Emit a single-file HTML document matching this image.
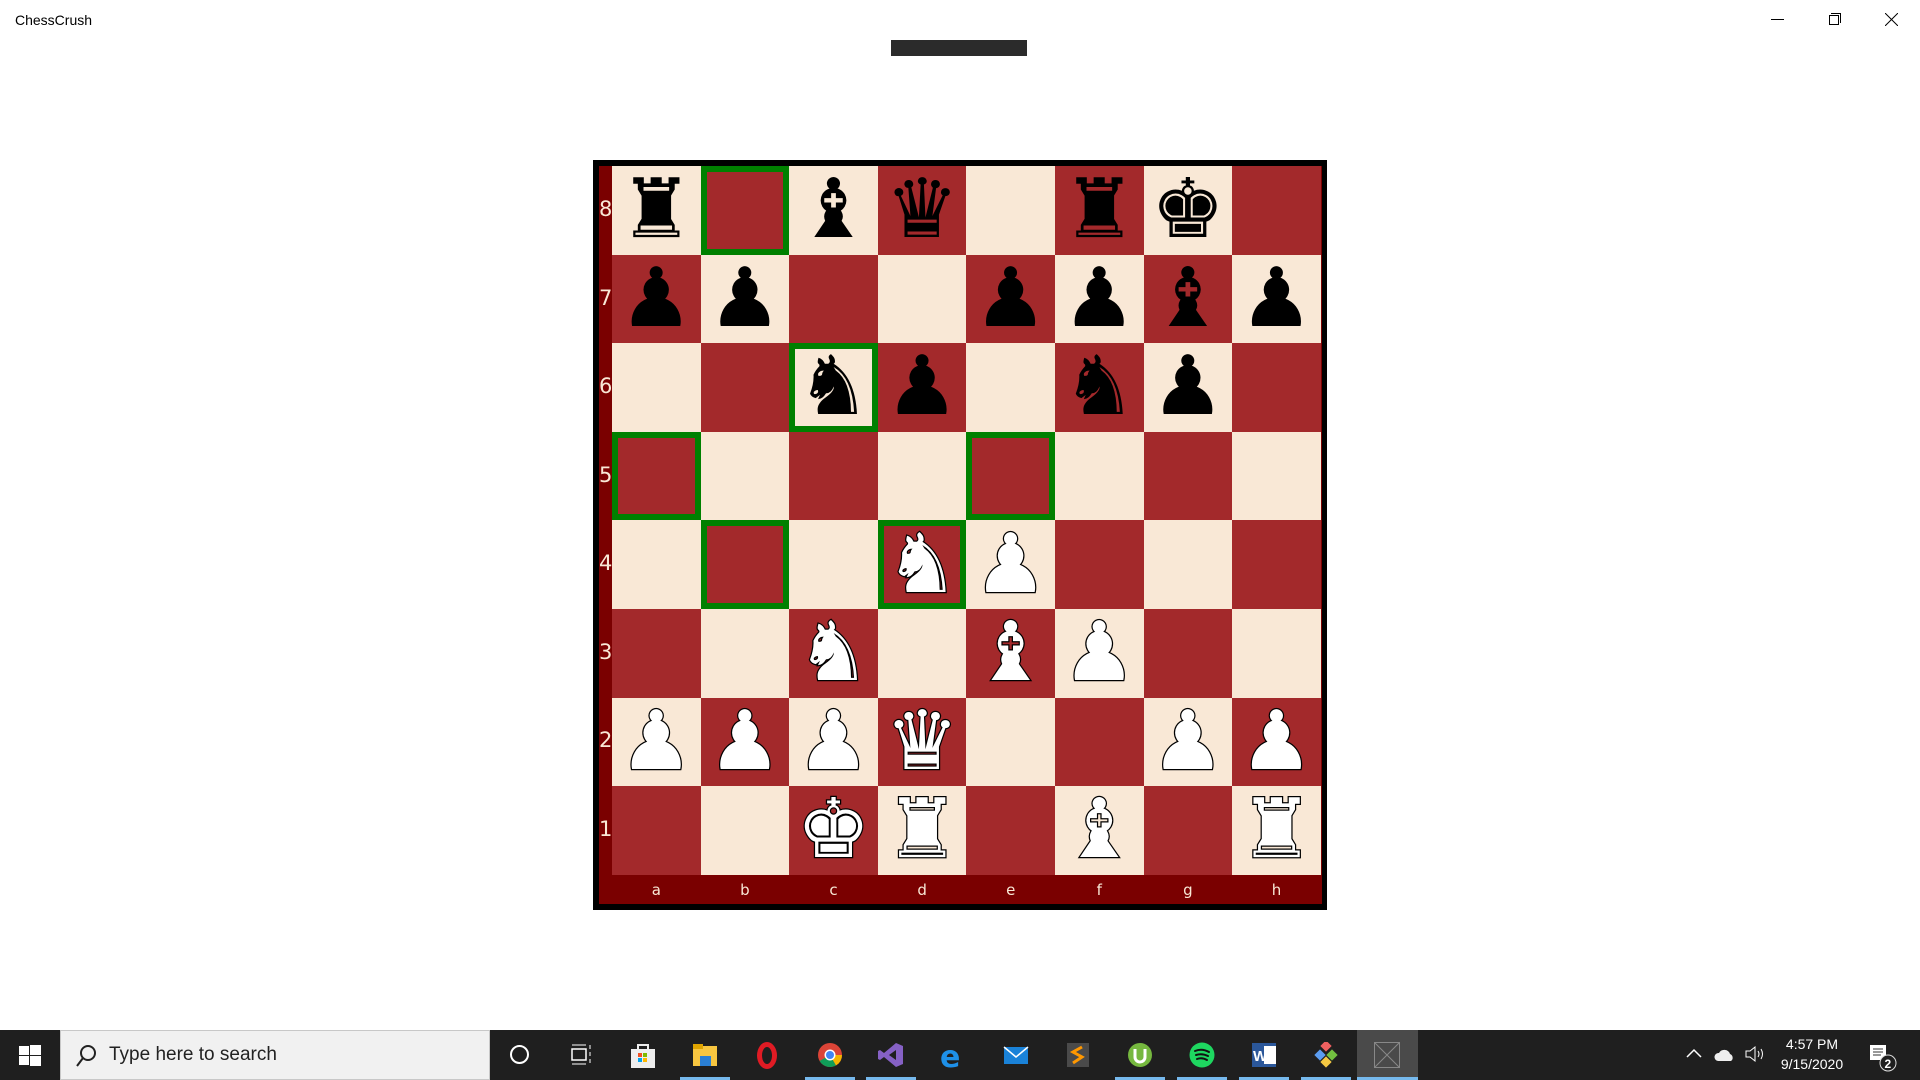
<!DOCTYPE html>
<html><head><meta charset="utf-8"><style>
*{margin:0;padding:0;box-sizing:border-box}
body{width:1920px;height:1080px;background:#fff;position:relative;overflow:hidden;font-family:"Liberation Sans",sans-serif}
.title{position:absolute;left:15px;top:12px;font-size:14px;color:#000}
.ctl{position:absolute;top:8px;font-size:16px;color:#000}
.topbar{position:absolute;left:891px;top:40px;width:136px;height:16px;background:#2b2b2b}
.board{position:absolute;left:593px;top:160px;width:734px;height:750px;background:#000}
.strip{position:absolute;left:6px;top:6px;width:723px;height:738px;background:#7a0000}
.grid{position:absolute;left:612px;top:166px;display:grid;grid-template-columns:repeat(8,88.6px);grid-template-rows:repeat(8,88.6px)}
.sq{display:flex;align-items:center;justify-content:center;font-family:"DejaVu Sans",sans-serif;font-size:82px;line-height:1;overflow:hidden}
.L{background:#f9e8d6}.D{background:#a3292b}
.h{box-shadow:inset 0 0 0 6px #008000}
.b{color:#000}
.w{color:#fff;-webkit-text-stroke:2.5px #000;paint-order:stroke fill}
.rl{position:absolute;left:599px;width:13px;text-align:center;color:#f9e8d6;font-size:21px;font-family:"DejaVu Sans",sans-serif}
.fl{position:absolute;top:881px;width:88.6px;text-align:center;color:#f9e8d6;font-size:15px;font-family:"DejaVu Sans",sans-serif}
.tb{position:absolute;left:0;top:1030px;width:1920px;height:50px;background:#1f1f1f}
.search{position:absolute;left:60px;top:1030px;width:430px;height:50px;background:#f1f1f1;border:1px solid #c8c8c8}
.search span{position:absolute;left:48px;top:13px;font-size:19px;color:#222}
.ic{position:absolute;top:1042px;width:26px;height:26px}
.ul{position:absolute;top:1077px;height:3px;width:50px;background:#76b9ed}
</style></head><body>
<div class="title">ChessCrush</div>
<div style="position:absolute;left:1771px;top:19px;width:13px;height:1px;background:#000"></div>
<div style="position:absolute;left:1829px;top:15px;width:10px;height:10px;border:1px solid #000;background:#fff"></div>
<div style="position:absolute;left:1831px;top:13px;width:10px;height:10px;border-top:1px solid #000;border-right:1px solid #000"></div>
<svg style="position:absolute;left:1885px;top:13px" width="13" height="13"><path d="M0 0 L13 13 M13 0 L0 13" stroke="#000" stroke-width="1"/></svg>
<div class="topbar"></div>

<div class="board"><div class="strip"></div></div>
<div class="grid">
<div class="sq L b">&#9820;</div>
<div class="sq D h"></div>
<div class="sq L b">&#9821;</div>
<div class="sq D b">&#9819;</div>
<div class="sq L"></div>
<div class="sq D b">&#9820;</div>
<div class="sq L b">&#9818;</div>
<div class="sq D"></div>

<div class="sq D b">&#9823;&#xFE0E;</div>
<div class="sq L b">&#9823;&#xFE0E;</div>
<div class="sq D"></div>
<div class="sq L"></div>
<div class="sq D b">&#9823;&#xFE0E;</div>
<div class="sq L b">&#9823;&#xFE0E;</div>
<div class="sq D b">&#9821;</div>
<div class="sq L b">&#9823;&#xFE0E;</div>

<div class="sq L"></div>
<div class="sq D"></div>
<div class="sq L b h">&#9822;</div>
<div class="sq D b">&#9823;&#xFE0E;</div>
<div class="sq L"></div>
<div class="sq D b">&#9822;</div>
<div class="sq L b">&#9823;&#xFE0E;</div>
<div class="sq D"></div>

<div class="sq D h"></div>
<div class="sq L"></div>
<div class="sq D"></div>
<div class="sq L"></div>
<div class="sq D h"></div>
<div class="sq L"></div>
<div class="sq D"></div>
<div class="sq L"></div>

<div class="sq L"></div>
<div class="sq D h"></div>
<div class="sq L"></div>
<div class="sq D w h">&#9822;</div>
<div class="sq L w">&#9823;&#xFE0E;</div>
<div class="sq D"></div>
<div class="sq L"></div>
<div class="sq D"></div>

<div class="sq D"></div>
<div class="sq L"></div>
<div class="sq D w">&#9822;</div>
<div class="sq L"></div>
<div class="sq D w">&#9821;</div>
<div class="sq L w">&#9823;&#xFE0E;</div>
<div class="sq D"></div>
<div class="sq L"></div>

<div class="sq L w">&#9823;&#xFE0E;</div>
<div class="sq D w">&#9823;&#xFE0E;</div>
<div class="sq L w">&#9823;&#xFE0E;</div>
<div class="sq D w">&#9819;</div>
<div class="sq L"></div>
<div class="sq D"></div>
<div class="sq L w">&#9823;&#xFE0E;</div>
<div class="sq D w">&#9823;&#xFE0E;</div>

<div class="sq D"></div>
<div class="sq L"></div>
<div class="sq D w">&#9818;</div>
<div class="sq L w">&#9820;</div>
<div class="sq D"></div>
<div class="sq L w">&#9821;</div>
<div class="sq D"></div>
<div class="sq L w">&#9820;</div>
</div>
<div class="rl" style="top:197px">8</div>
<div class="rl" style="top:286px">7</div>
<div class="rl" style="top:374px">6</div>
<div class="rl" style="top:463px">5</div>
<div class="rl" style="top:551px">4</div>
<div class="rl" style="top:640px">3</div>
<div class="rl" style="top:728px">2</div>
<div class="rl" style="top:817px">1</div>
<div class="fl" style="left:612px">a</div>
<div class="fl" style="left:700.6px">b</div>
<div class="fl" style="left:789.2px">c</div>
<div class="fl" style="left:877.8px">d</div>
<div class="fl" style="left:966.4px">e</div>
<div class="fl" style="left:1055px">f</div>
<div class="fl" style="left:1143.6px">g</div>
<div class="fl" style="left:1232.2px">h</div>

<div class="tb"></div>
<svg style="position:absolute;left:19px;top:1045px" width="22" height="22"><rect x="0" y="1" width="10" height="9" fill="#fff"/><rect x="11" y="0" width="11" height="10" fill="#fff"/><rect x="0" y="11" width="10" height="9" fill="#fff"/><rect x="11" y="11" width="11" height="10" fill="#fff"/></svg>
<div class="search"><svg style="position:absolute;left:14px;top:13px" width="22" height="24"><circle cx="13" cy="9" r="7" fill="none" stroke="#222" stroke-width="2"/><line x1="8" y1="14" x2="2" y2="22" stroke="#222" stroke-width="2"/></svg><span>Type here to search</span></div>
<div style="position:absolute;left:510px;top:1045px;width:19px;height:19px;border:2.5px solid #fff;border-radius:50%"></div>
<svg style="position:absolute;left:570px;top:1044px" width="22" height="22"><rect x="2" y="5" width="14" height="11" fill="none" stroke="#fff" stroke-width="1.5"/><line x1="2" y1="1" x2="16" y2="1" stroke="#fff"/><line x1="2" y1="20" x2="16" y2="20" stroke="#fff"/><line x1="20" y1="1" x2="20" y2="20" stroke="#fff" stroke-dasharray="4 3"/></svg>
<svg class="ic" style="left:630px"><rect x="1" y="7" width="24" height="19" fill="#eee"/><path d="M8 7 V3 h10 v4" fill="none" stroke="#eee" stroke-width="2"/><rect x="8" y="11" width="4" height="4" fill="#f25022"/><rect x="13" y="11" width="4" height="4" fill="#7fba00"/><rect x="8" y="16" width="4" height="4" fill="#00a4ef"/><rect x="13" y="16" width="4" height="4" fill="#ffb900"/></svg>
<svg class="ic" style="left:692px"><rect x="1" y="4" width="24" height="20" fill="#f8c640"/><rect x="1" y="2" width="10" height="5" fill="#e0a400"/><rect x="8" y="14" width="11" height="10" fill="#2a7fd4"/></svg>
<div class="ul" style="left:680px"></div>
<div style="position:absolute;left:757px;top:1042px;width:20px;height:27px;border:5px solid #e01b24;border-radius:50%"></div>
<svg class="ic" style="left:817px"><circle cx="13" cy="13" r="12" fill="#db4437"/><path d="M13 13 L2.6 19 A12 12 0 0 0 19 23.4Z" fill="#0f9d58"/><path d="M13 13 L19 23.4 A12 12 0 0 0 25 13 Z" fill="#f4b400"/><circle cx="13" cy="13" r="5.5" fill="#fff"/><circle cx="13" cy="13" r="4" fill="#4285f4"/></svg>
<div class="ul" style="left:805px"></div>
<svg class="ic" style="left:878px"><path d="M18 1 L25 4 V22 L18 25 L6 15 L2 18 L0 17 V9 L2 8 L6 11Z M18 8 L11 13 L18 18Z" fill="#8661c5" fill-rule="evenodd"/></svg>
<div class="ul" style="left:866px"></div>
<div style="position:absolute;left:940px;top:1040px;font-size:30px;color:#1e90e8;font-weight:bold;font-family:'DejaVu Sans'">e</div>
<svg class="ic" style="left:1003px"><rect x="1" y="5" width="24" height="17" fill="#1a82d8"/><path d="M1 5 L13 15 L25 5" fill="none" stroke="#fff" stroke-width="1.5"/></svg>
<svg class="ic" style="left:1065px"><rect x="2" y="1" width="22" height="24" fill="#4a4a4a"/><path d="M17 5 L8 10 L17 15 L8 21" fill="none" stroke="#ff9800" stroke-width="3"/></svg>
<svg class="ic" style="left:1127px"><circle cx="13" cy="13" r="12" fill="#76b83f"/><path d="M8 7 V15 a5 5 0 0 0 10 0 V7" fill="none" stroke="#fff" stroke-width="3"/></svg>
<div class="ul" style="left:1115px"></div>
<svg class="ic" style="left:1189px"><circle cx="13" cy="13" r="12.5" fill="#1ed760"/><path d="M6 9 Q13 6 20 10 M7 13 Q13 11 19 14 M8 17 Q13 15 18 18" fill="none" stroke="#111" stroke-width="2" stroke-linecap="round"/></svg>
<div class="ul" style="left:1177px"></div>
<svg class="ic" style="left:1251px"><rect x="1" y="1" width="24" height="24" fill="#2b579a"/><rect x="13" y="4" width="12" height="18" fill="#fff"/><text x="2" y="19" font-family="Liberation Sans" font-weight="bold" font-size="15" fill="#fff">W</text></svg>
<div class="ul" style="left:1239px"></div>
<svg class="ic" style="left:1313px"><rect x="9" y="0" width="8" height="8" fill="#f06060" transform="rotate(45 13 4)"/><rect x="3" y="9" width="8" height="8" fill="#5b9cf0" transform="rotate(45 7 13)"/><rect x="15" y="9" width="8" height="8" fill="#72c040" transform="rotate(45 19 13)"/><rect x="9" y="16" width="8" height="8" fill="#f5c842" transform="rotate(45 13 20)"/></svg>
<div class="ul" style="left:1301px"></div>
<div style="position:absolute;left:1357px;top:1030px;width:61px;height:50px;background:#4a4a4a"></div>
<svg class="ic" style="left:1374px"><rect x="0.5" y="0.5" width="25" height="25" fill="none" stroke="#888"/><path d="M0 0 L26 26 M26 0 L0 26" stroke="#888"/></svg>
<div class="ul" style="left:1357px;width:61px"></div>
<svg style="position:absolute;left:1686px;top:1048px" width="16" height="10"><path d="M1 9 L8 2 L15 9" fill="none" stroke="#fff" stroke-width="1.5"/></svg>
<svg style="position:absolute;left:1714px;top:1048px" width="22" height="14"><path d="M4 13 a4 4 0 0 1 1-8 a6 6 0 0 1 11 1 a4 4 0 0 1 1 7Z" fill="#eee"/></svg>
<svg style="position:absolute;left:1745px;top:1045px" width="20" height="18"><path d="M1 6 h4 l5-4 v14 l-5-4 h-4z" fill="none" stroke="#fff"/><path d="M13 6 q2 3 0 6 M16 4 q3 5 0 10" fill="none" stroke="#fff"/></svg>
<div style="position:absolute;left:1770px;top:1034px;width:84px;text-align:center;color:#fff;font-size:14px;line-height:20px">4:57 PM<br>9/15/2020</div>
<svg style="position:absolute;left:1868px;top:1044px" width="30" height="30"><path d="M2 1 h16 v15 h-16z" fill="#fff"/><path d="M5 5 h10 M5 8 h10 M5 11 h8" stroke="#333"/><circle cx="20" cy="19" r="8" fill="#1f1f1f" stroke="#ddd"/><text x="16.5" y="24" font-size="12" font-family="Liberation Sans" font-weight="bold" fill="#fff">2</text></svg>
</body></html>
